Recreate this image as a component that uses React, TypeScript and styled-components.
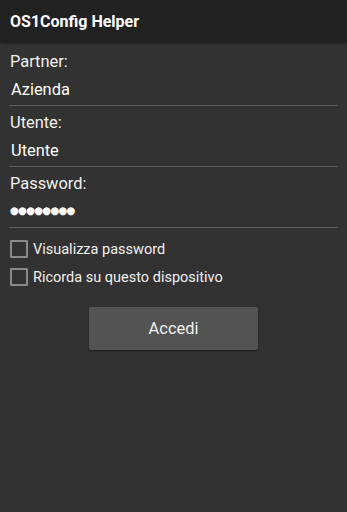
import React, { useState } from 'react'
import styled, { createGlobalStyle } from 'styled-components'

const GlobalStyle = createGlobalStyle`
  html, body {
    margin: 0;
    padding: 0;
    background: #323232;
    font-family: Roboto, "Noto Sans", sans-serif;
  }
`

const Screen = styled.div`
  width: 347px;
  height: 512px;
  display: flex;
  flex-flow: column;
  background: #323232;
  color: #f2f2f2;
`

const Toolbar = styled.div`
  height: 42px;
  display: flex;
  align-items: center;
  padding: 0 10px;
  background: #212121;
  box-shadow: 0 1px 3px rgba(0, 0, 0, 0.5);
`

const Title = styled.h1`
  margin: 0;
  font-size: 16px;
  font-weight: bold;
  color: #ffffff;
`

const Form = styled.div`
  display: flex;
  flex-flow: column;
  padding: 10px 9px 0 9px;
`

const Label = styled.label`
  font-size: 16.4px;
  line-height: 20px;
  padding-left: 1px;
  color: #f0f0f0;
`

const Input = styled.input<{ $dots?: boolean }>`
  height: 34px;
  margin: 0 0 7px 0;
  padding: ${p => (p.$dots ? '0 1px 0 1px' : '2px 2px 0 2px')};
  border: 0;
  border-bottom: 1px solid #5c5c5c;
  background: transparent;
  color: #ffffff;
  font-family: ${p => (p.$dots ? '"DejaVu Sans", sans-serif' : 'Roboto, "Noto Sans", sans-serif')};
  font-size: ${p => (p.$dots ? '10.2px' : '16.4px')};
  letter-spacing: ${p => (p.$dots ? '-0.8px' : '0')};
  outline: none;
  box-sizing: border-box;
`

const Check = styled.label`
  display: flex;
  align-items: center;
  gap: 5px;
  height: 28px;
  padding-left: 1px;
  font-size: 14.5px;
  color: #f0f0f0;
`

const Box = styled.span`
  width: 14px;
  height: 14px;
  border: 2px solid #8a8a8a;
  border-radius: 1px;
`

const Actions = styled.div`
  display: flex;
  justify-content: center;
  margin-top: 16px;
`

const Button = styled.button`
  width: 169px;
  height: 43px;
  border: 0;
  border-radius: 2px;
  background: #535353;
  box-shadow: 0 1px 2px rgba(0, 0, 0, 0.4);
  color: #f2f2f2;
  font-family: Roboto, "Noto Sans", sans-serif;
  font-size: 16.4px;
`

export default function App() {
  const [partner, setPartner] = useState('Azienda')
  const [user, setUser] = useState('Utente')
  const [pass, setPass] = useState('aaaaaaaa')

  return (
    <>
      <GlobalStyle />
      <Screen>
        <Toolbar>
          <Title>OS1Config Helper</Title>
        </Toolbar>
        <Form>
          <Label>Partner:</Label>
          <Input value={partner} onChange={e => setPartner(e.target.value)} />
          <Label>Utente:</Label>
          <Input value={user} onChange={e => setUser(e.target.value)} />
          <Label>Password:</Label>
          <Input
            $dots
            value={'●'.repeat(pass.length)}
            onChange={e => setPass(e.target.value)}
          />
          <Check><Box />Visualizza password</Check>
          <Check><Box />Ricorda su questo dispositivo</Check>
          <Actions>
            <Button>Accedi</Button>
          </Actions>
        </Form>
      </Screen>
    </>
  )
}
